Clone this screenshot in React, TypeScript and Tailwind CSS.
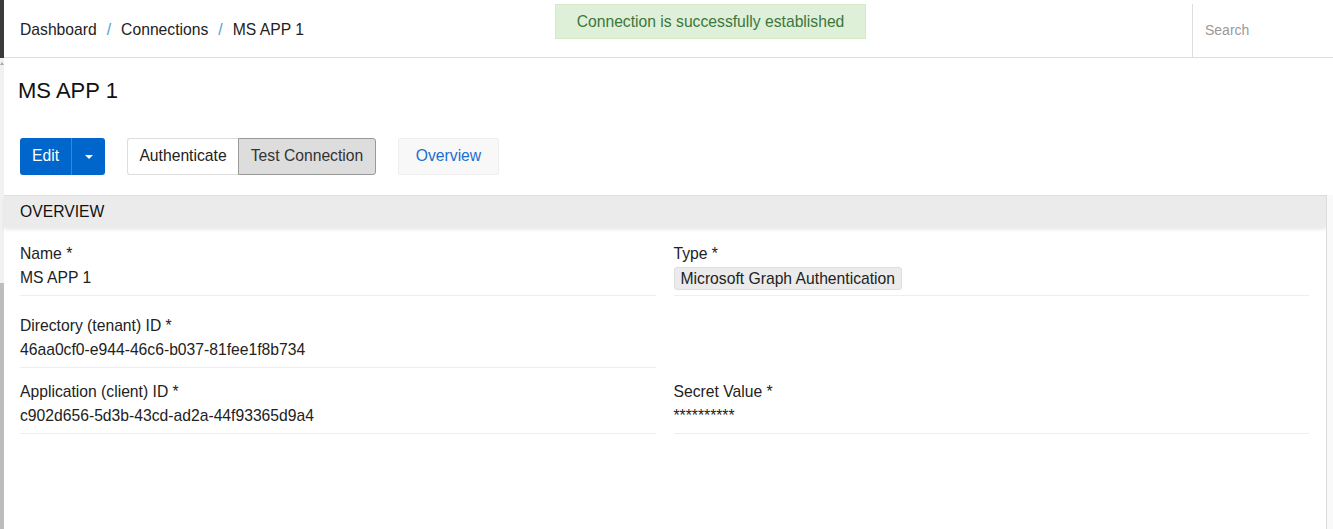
import { useState } from 'react'

type Field = { label: string; value: string; badge?: boolean }

const ROWS: Array<{ gap: string; left: Field | null; right: Field | null }> = [
  {
    gap: 'mt-0',
    left: { label: 'Name *', value: 'MS APP 1' },
    right: { label: 'Type *', value: 'Microsoft Graph Authentication', badge: true },
  },
  {
    gap: 'mt-[18px]',
    left: { label: 'Directory (tenant) ID *', value: '46aa0cf0-e944-46c6-b037-81fee1f8b734' },
    right: null,
  },
  {
    gap: 'mt-[12px]',
    left: { label: 'Application (client) ID *', value: 'c902d656-5d3b-43cd-ad2a-44f93365d9a4' },
    right: { label: 'Secret Value *', value: '**********' },
  },
]

function FieldBlock({ field }: { field: Field | null }) {
  if (!field) return <div />
  return (
    <div className="border-b border-[#eeeeee] pb-[5px]">
      <div className="text-[15.7px] leading-[24px] text-[#222]">{field.label}</div>
      {field.badge ? (
        <div className="mt-[1px] h-[23px]">
          <span className="inline-block rounded-[3px] border border-[#dddddd] bg-[#ebebeb] px-[6px] text-[15.7px] leading-[21px] text-[#222]">
            {field.value}
          </span>
        </div>
      ) : (
        <div className="text-[15.7px] leading-[24px] text-[#222]">{field.value}</div>
      )}
    </div>
  )
}

export default function App() {
  const [query, setQuery] = useState('')
  return (
    <div
      className="flex h-[529px] w-[1333px] overflow-hidden bg-white text-[#333]"
      style={{ fontFamily: '"Liberation Sans", Arial, sans-serif' }}
    >
      {/* left rail */}
      <div className="flex w-[4px] shrink-0 flex-col">
        <div className="h-[58px] bg-[#3a3a3a]" />
        <div className="relative flex-1 bg-[#f1f1f1]">
          <div className="mx-auto mt-[4px] h-0 w-0 border-x-[2px] border-b-[3px] border-x-transparent border-b-[#a8a8a8]" />
        </div>
        <div className="h-[246px] bg-[#bdbdbd]" />
      </div>

      <div className="relative flex min-w-0 flex-1 flex-col">
        {/* header */}
        <header className="flex h-[58px] shrink-0 items-stretch border-b border-[#dddddd]">
          <nav className="flex flex-1 items-center gap-[10px] pl-[16px] pt-[3px] text-[15.7px] text-[#222]">
            <span>Dashboard</span>
            <span className="text-[#4a9bd8]">/</span>
            <span>Connections</span>
            <span className="text-[#4a9bd8]">/</span>
            <span>MS APP 1</span>
          </nav>
          <div className="mt-[4px] flex w-[141px] items-center border-l border-[#dddddd]">
            <input
              value={query}
              onChange={(e) => setQuery(e.target.value)}
              placeholder="Search"
              className="w-full bg-transparent pl-[12px] text-[14px] text-[#333] outline-none placeholder:text-[#999]"
            />
          </div>
        </header>

        {/* toast */}
        <div className="absolute left-[551px] top-[4px] flex h-[35px] w-[311px] items-center justify-center border border-[#d6e9c6] bg-[#dff0d8] text-[15.7px] text-[#3c763d]">
          Connection is successfully established
        </div>

        <h1 className="ml-[14px] mt-[18px] text-[22px] leading-[30px] text-[#111]">MS APP 1</h1>

        {/* action bar */}
        <div className="ml-[16px] mt-[32px] flex h-[37px] items-stretch">
          <div className="flex overflow-hidden rounded-[3px] bg-[#0066cc] text-white">
            <button className="w-[51px] pb-[2px] text-[15.7px]">Edit</button>
            <div className="w-px bg-[#3a86d6]" />
            <button className="flex w-[33px] items-center justify-center">
              <span className="h-0 w-0 border-x-[4px] border-t-[4px] border-x-transparent border-t-white" />
            </button>
          </div>
          <div className="ml-[22px] flex">
            <button className="w-[111px] rounded-l-[3px] border border-r-0 border-[#dddddd] bg-white pb-[2px] text-[15.7px] text-[#222]">
              Authenticate
            </button>
            <button className="w-[138px] rounded-r-[3px] border border-[#999999] bg-[#dddddd] pb-[2px] text-[15.7px] text-[#333]">
              Test Connection
            </button>
          </div>
          <button className="ml-[22px] w-[101px] rounded-[2px] border border-[#eeeeee] bg-[#f8f8f8] pb-[2px] text-[15.7px] text-[#1a6ed2]">
            Overview
          </button>
        </div>

        {/* overview panel */}
        <div className="mt-[20px] flex flex-1">
          <div className="flex-1">
            <div className="flex h-[32px] items-center border-t border-[#dddddd] bg-[#ebebeb] pl-[16px] text-[15.7px] text-[#111] shadow-[0_3px_3px_rgba(0,0,0,0.08)]">
              OVERVIEW
            </div>
            <div className="px-[16px] pt-[15px] pr-[17px]">
              {ROWS.map((row, i) => (
                <div key={i} className={`grid grid-cols-2 gap-x-[18px] ${row.gap}`}>
                  <FieldBlock field={row.left} />
                  <FieldBlock field={row.right} />
                </div>
              ))}
            </div>
          </div>
          <div className="w-[7px] border-l border-[#dddddd] bg-[#f9f9f9]" />
        </div>
      </div>
    </div>
  )
}
